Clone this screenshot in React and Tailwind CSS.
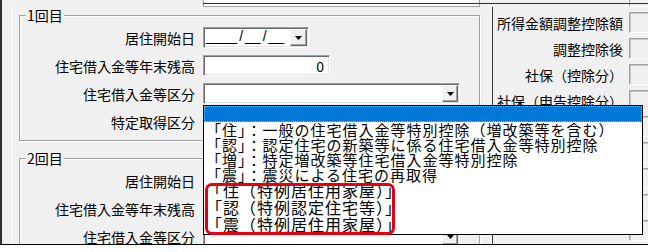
const JP = "font-['Noto_Sans_CJK_JP',sans-serif]";

function Arrow() {
  return (
    <svg width="7" height="4" viewBox="0 0 7 4">
      <path d="M0 0h7L3.5 4z" fill="#000" />
    </svg>
  );
}

function DropBtn({ w = "w-[17px]" }) {
  return (
    <div
      className={`${w} h-[17px] flex items-center justify-center bg-[#f0f0f0] border border-t-white border-l-white border-b-[#696969] border-r-[#696969] shadow-[inset_-1px_-1px_0_#a0a0a0]`}
    >
      <Arrow />
    </div>
  );
}

const sunken =
  "h-[21px] bg-white border border-t-[#a0a0a0] border-l-[#a0a0a0] border-b-white border-r-white shadow-[inset_1px_1px_0_#696969,inset_-1px_-1px_0_#e3e3e3]";

function DateField() {
  return (
    <div className={`${sunken} w-[106px] flex items-center justify-between pl-[2px] pr-px`}>
      <span className="font-['Liberation_Sans',sans-serif] text-[14px] leading-none mt-[-3px]">
        ____<span className="mx-[2px]">/</span>__<span className="mx-[2px]">/</span>__
      </span>
      <DropBtn />
    </div>
  );
}

function AmountField() {
  return (
    <div className={`${sunken} w-[127px] flex items-center justify-end pr-[5px] text-[14px] leading-none`}>
      0
    </div>
  );
}

function Combo() {
  return (
    <div className={`${sunken} w-[257px] flex items-center justify-end pr-px`}>
      <DropBtn w="w-[16px]" />
    </div>
  );
}

function Row({ label, children }) {
  return (
    <div className="flex items-center h-[21px]">
      <div className="w-[175px] text-right text-[14px] leading-none whitespace-nowrap">{label}</div>
      <div className="ml-[8px]">{children}</div>
    </div>
  );
}

function Group({ title, className = "", children }) {
  return (
    <fieldset
      className={`w-[461px] border border-[#a0a0a0] shadow-[inset_1px_1px_0_#fff,1px_1px_0_#fff] ${className}`}
    >
      <legend className="ml-[6px] px-px bg-[#f0f0f0] text-[14px] leading-[16px]">{title}</legend>
      <div className="flex flex-col gap-[7px] pt-[4px] pb-[8px]">{children}</div>
    </fieldset>
  );
}

const rightLabels = ["所得金額調整控除額", "調整控除後", "社保（控除分）", "社保（申告控除分）", "", "", "", "", ""];

const listTop = [
  "「住」：一般の住宅借入金等特別控除（増改築等を含む）",
  "「認」：認定住宅の新築等に係る住宅借入金等特別控除",
  "「増」：特定増改築等住宅借入金等特別控除",
  "「震」：震災による住宅の再取得",
];
const listNew = ["「住（特例居住用家屋）」", "「認（特例認定住宅等）」", "「震（特例居住用家屋）」"];

export default function App() {
  return (
    <div className={`relative w-[648px] h-[252px] bg-white overflow-hidden text-black ${JP}`}>
      {/* window frame */}
      <div className="w-[648px] h-[245px] flex flex-col bg-[#f0f0f0] border-l-2 border-l-[#2e2e2e] border-b border-b-black">
        {/* clipped row above */}
        <div className="h-[7px] flex shrink-0">
          <div className="w-[201px]" />
          <div className="flex-1 flex flex-col">
            <div className="h-[3px] flex">
              <div className="w-[277px] bg-white border-x border-x-[#a0a0a0]" />
              <div className="w-[149px]" />
              <div className="flex-1 border-l border-l-[#a0a0a0]" />
            </div>
            <div className="h-px bg-[#2e2e2e]" />
            <div className="h-[3px] flex">
              <div className="w-[277px] bg-white border-x border-x-[#a0a0a0] border-b border-b-[#a0a0a0]" />
              <div className="w-[149px]" />
              <div className="flex-1 border-l border-b border-l-[#a0a0a0] border-b-white" />
            </div>
          </div>
        </div>

        {/* body */}
        <div className="h-[237px] flex">
          {/* left panel */}
          <div className="w-[490px] pl-[9px] overflow-hidden">
            <div className="h-full border-l border-l-white pl-[7px]">
              <Group title="1回目">
                <Row label="居住開始日"><DateField /></Row>
                <Row label="住宅借入金等年末残高"><AmountField /></Row>
                <Row label="住宅借入金等区分"><Combo /></Row>
                <Row label="特定取得区分"><Combo /></Row>
              </Group>
              <Group title="2回目" className="mt-[9px]">
                <Row label="居住開始日"><DateField /></Row>
                <Row label="住宅借入金等年末残高"><AmountField /></Row>
                <Row label="住宅借入金等区分"><Combo /></Row>
              </Group>
            </div>
          </div>

          {/* separator */}
          <div className="w-px bg-[#3a3a3a]" />

          {/* right panel */}
          <div className="w-[155px] pt-[5px] flex flex-col gap-[5px] overflow-hidden">
            {rightLabels.map((t, i) => (
              <div key={i} className="h-[21px] shrink-0 flex items-center justify-end">
                <span className="text-[14px] leading-none whitespace-nowrap">{t}</span>
                <div className="ml-[6px] w-[19px] h-[21px] bg-[#f0f0f0] border-t border-l border-b border-t-[#a0a0a0] border-l-[#a0a0a0] border-b-white shadow-[inset_1px_1px_0_#c8c8c8]" />
              </div>
            ))}
          </div>
        </div>
      </div>

      {/* open dropdown list */}
      <div className="absolute left-[203px] top-[105px] w-[440px] h-[130px] bg-white border border-black overflow-hidden">
        <div className="h-[16px] bg-[#0078d7] border border-dotted border-[#f7a536]" />
        {listTop.map((t) => (
          <div key={t} className="h-[15px] pl-[2px] text-[15px] leading-[15px] tracking-[1px] whitespace-nowrap">
            {t}
          </div>
        ))}
        {listNew.map((t) => (
          <div key={t} className="h-[17px] pl-[2px] text-[16px] leading-[17px] tracking-[1px] whitespace-nowrap">
            {t}
          </div>
        ))}
      </div>

      {/* red annotation */}
      <div className="absolute left-[205px] top-[183px] w-[190px] h-[52px] border-[3px] border-[#e8000f] rounded-[7px]" />
    </div>
  );
}
